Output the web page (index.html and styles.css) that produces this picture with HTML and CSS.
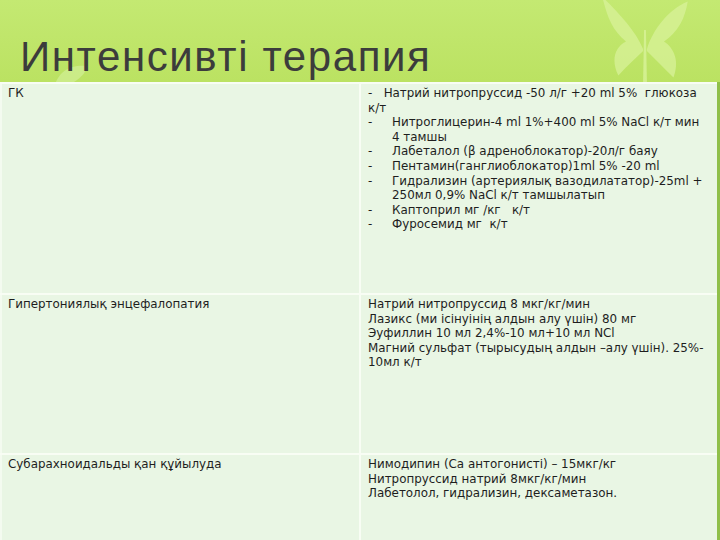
FILE: index.html
```html
<!DOCTYPE html>
<html>
<head>
<meta charset="utf-8">
<link rel="stylesheet" href="styles.css">
</head>
<body>
<div class="slide">
  <svg class="butterfly" viewBox="0 0 100 100" width="110" height="95">
    <path d="M48 60 C40 40 20 20 5 5 C10 25 15 40 30 52 C18 58 14 72 22 88 C30 78 40 70 48 62 Z" fill="#d8f29a" opacity="0.75"/>
    <path d="M52 60 C58 40 75 18 95 10 C92 28 85 42 70 52 C82 60 86 74 80 90 C70 80 60 70 52 62 Z" fill="#d8f29a" opacity="0.75"/>
    <path d="M49 40 L51 40 L52 95 L48 95 Z" fill="#d8f29a" opacity="0.8"/>
  </svg>
  <svg class="wing" viewBox="0 0 40 30" width="40" height="30">
    <path d="M2 28 C6 10 20 4 36 6 C32 16 22 26 2 28 Z" fill="#d5f1a0" opacity="0.6"/>
  </svg>
  <header class="title-bar">
    <h1 class="title">Интенсивті терапия</h1>
  </header>
  <div class="table">
    <div class="cell">ГК</div>
    <div class="cell">
      <p class="first">-&nbsp;&nbsp; Натрий нитропруссид -50 л/г +20 ml 5%&nbsp; глюкоза <span class="nw">к/т</span></p>
      <ul class="dash-list">
        <li><span class="dash">-</span><span>Нитроглицерин-4 ml 1%+400 ml 5% NaCl <span class="nw">к/т</span> мин 4&nbsp;тамшы</span></li>
        <li><span class="dash">-</span><span>Лабеталол (β адреноблокатор)-20л/г баяу</span></li>
        <li><span class="dash">-</span><span>Пентамин(ганглиоблокатор)1ml 5% -20 ml</span></li>
        <li><span class="dash">-</span><span>Гидрализин (артериялық вазодилататор)-25ml + 250мл 0,9% NaCl <span class="nw">к/т</span> тамшылатып</span></li>
        <li><span class="dash">-</span><span>Каптоприл мг /кг&nbsp;&nbsp; <span class="nw">к/т</span></span></li>
        <li><span class="dash">-</span><span>Фуросемид мг&nbsp; <span class="nw">к/т</span></span></li>
      </ul>
    </div>
    <div class="cell">Гипертониялық энцефалопатия</div>
    <div class="cell">
      Натрий нитропруссид 8 мкг/кг/мин<br>
      Лазикс (ми ісінуінің алдын алу үшін) 80 мг<br>
      Эуфиллин 10 мл 2,4%-10 мл+10 мл NCl<br>
      Магний сульфат (тырысудың алдын –алу үшін). 25%-<wbr>10мл <span class="nw">к/т</span>
    </div>
    <div class="cell">Субарахноидальды қан құйылуда</div>
    <div class="cell">
      Нимодипин (Са антогонисті) – 15мкг/кг<br>
      Нитропруссид натрий 8мкг/кг/мин<br>
      Лабетолол, гидрализин, дексаметазон.
    </div>
  </div>
</div>
</body>
</html>
```

FILE: styles.css
```css
html, body {
  margin: 0;
  padding: 0;
}
body {
  width: 720px;
  height: 540px;
  overflow: hidden;
  background: linear-gradient(180deg, #c4e972 0%, #bbe262 15%, #b4dd58 100%);
}
.slide {
  position: relative;
  width: 720px;
  height: 540px;
}
.butterfly {
  position: absolute;
  left: 590px;
  top: -8px;
}
.wing {
  position: absolute;
  left: 52px;
  top: 60px;
}
.title-bar {
  height: 82px;
  position: relative;
}
.title {
  margin: 0;
  padding: 34px 0 0 20px;
  font-family: "Liberation Sans", Arial, sans-serif;
  font-weight: normal;
  font-size: 42px;
  line-height: 46px;
  color: #3c3c3c;
  letter-spacing: 1.6px;
}
.table {
  position: relative;
  display: grid;
  grid-template-columns: 359px 356px;
  grid-template-rows: 209px 158px 100px;
  gap: 2px;
  background: #f8fdf4;
  width: 717px;
  padding: 2px 0 0 0;
  border-right: 3px solid #8fbf4a;
  font-family: "DejaVu Sans", Verdana, sans-serif;
  font-size: 11.9px;
  line-height: 14.6px;
  color: #1e1e1e;
}
.cell {
  background: #e9f6e4;
  padding: 2px 3px 0 7px;
}
.cell:nth-child(odd) {
  border-left: 2px solid #f4fbf0;
  padding-left: 6px;
}
.nw {
  white-space: nowrap;
}
.first {
  margin: 0;
}
.dash-list {
  list-style: none;
  margin: 0;
  padding: 0;
}
.dash-list li {
  display: flex;
}
.dash {
  flex: 0 0 24px;
}
```
